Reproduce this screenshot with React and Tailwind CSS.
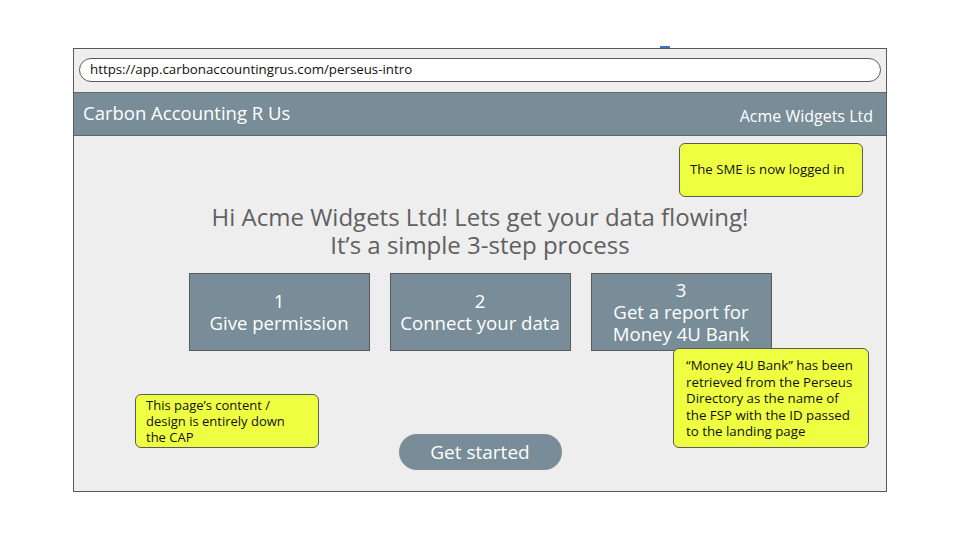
import React from 'react';

const steps = [
  { n: '1', lines: ['Give permission'] },
  { n: '2', lines: ['Connect your data'] },
  { n: '3', lines: ['Get a report for', 'Money 4U Bank'] },
];

function Note({ className, children }) {
  return (
    <div className={`absolute rounded-md border border-[#5a5a5a] bg-[#eeff41] text-[#111] ${className}`}>
      {children}
    </div>
  );
}

export default function App() {
  return (
    <div className="relative w-[960px] h-[540px] bg-white overflow-hidden font-['Open_Sans',sans-serif]">
      <div className="absolute left-[660px] top-[46px] w-[10px] h-[2px] bg-[#4472c4]" />
      <div className="relative ml-[73px] mt-[48px] w-[814px] h-[444px] border border-[#5a5a5a] bg-[#eeeeee]">
        <div className="px-[5px] pt-[9px] pb-[10px]">
          <div className="h-[24px] rounded-full border border-[#5a5a5a] bg-white pl-[10px] flex items-center text-[13.3px] text-[#111]">
            https://app.carbonaccountingrus.com/perseus-intro
          </div>
        </div>
        <div className="h-[44px] bg-[#788d98] border-t border-b border-[#666] flex items-center justify-between pl-[9px] pr-[13px] text-white">
          <span className="text-[18.5px] -mt-[2px]">Carbon Accounting R Us</span>
          <span className="text-[16px] mt-[4px]">Acme Widgets Ltd</span>
        </div>

        <div className="flex flex-col items-center pt-[67px]">
          <h1 className="text-[24px] leading-[28px] text-[#606060] text-center">
            <span className="block">Hi Acme Widgets Ltd! Lets get your data flowing!</span>
            <span className="block">It’s a simple 3-step process</span>
          </h1>
          <div className="flex gap-[20px] mt-[14px]">
            {steps.map((s) => (
              <div
                key={s.n}
                className="w-[181px] h-[78px] bg-[#788d98] border border-[#5a5a5a] flex flex-col items-center justify-center text-white text-[18.6px] leading-[22px]"
              >
                <span>{s.n}</span>
                {s.lines.map((l) => (
                  <span key={l}>{l}</span>
                ))}
              </div>
            ))}
          </div>
          <button className="mt-[83px] w-[163px] h-[36px] rounded-full bg-[#788d98] text-white text-[19px] flex items-center justify-center">
            Get started
          </button>
        </div>

        <Note className="left-[605px] top-[94px] w-[184px] h-[54px] flex items-center pl-[10px] text-[13.2px]">
          The SME is now logged in
        </Note>
        <Note className="left-[61px] top-[345px] w-[184px] h-[54px] pl-[10px] pt-[2px] text-[13px] leading-[16px]">
          <span className="block">This page’s content /</span>
          <span className="block">design is entirely down</span>
          <span className="block">the CAP</span>
        </Note>
        <Note className="left-[599px] top-[299px] w-[196px] h-[100px] pl-[12px] pt-[8px] text-[13.3px] leading-[16.6px]">
          <span className="block">“Money 4U Bank” has been</span>
          <span className="block">retrieved from the Perseus</span>
          <span className="block">Directory as the name of</span>
          <span className="block">the FSP with the ID passed</span>
          <span className="block">to the landing page</span>
        </Note>
      </div>
    </div>
  );
}
